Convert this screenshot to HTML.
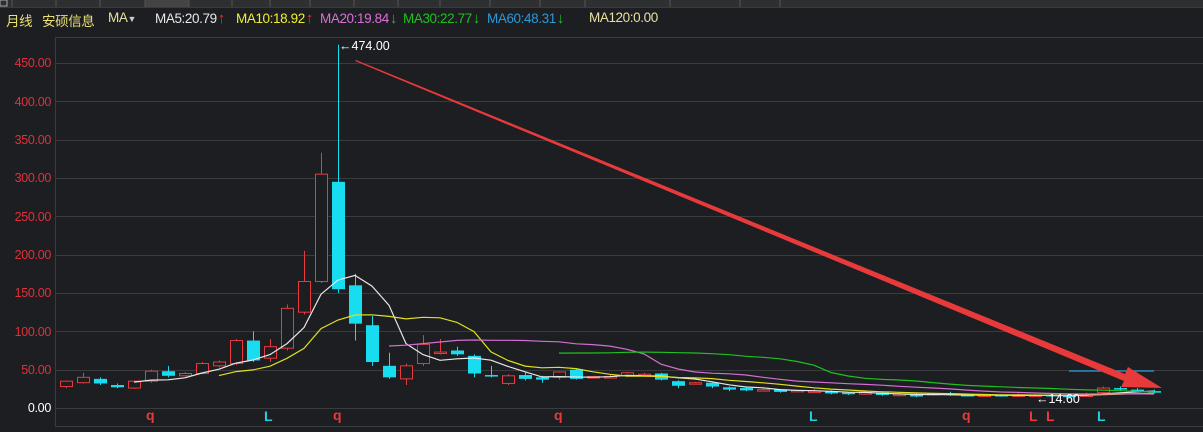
<!DOCTYPE html>
<html><head><meta charset="utf-8"><style>
body{margin:0;width:1203px;height:432px;background:#1d1e22;overflow:hidden;font-family:"Liberation Sans","Noto Sans CJK SC",sans-serif;position:relative}
.tb{position:absolute;left:0;top:0;width:1203px;height:7px;background:#2e2f31;border-bottom:1px solid #3a3a3a}
.hd{position:absolute;top:10px;left:6px;font-size:13.5px;white-space:nowrap;letter-spacing:-0.4px}
.hd span{position:absolute;top:0}
.hd b{font-size:15px;font-weight:900;margin-left:1px}
.ax{position:absolute;right:1152px;font-size:12.5px;color:#e0303a;text-align:right;letter-spacing:-0.3px}
</style></head><body>
<div class="tb">
<svg width="1203" height="7" style="position:absolute;left:0;top:0">
<rect x="0" y="0" width="7" height="6" fill="none" stroke="#aaa"/>
<rect x="145" y="0" width="44" height="7" fill="#444"/>
<g stroke="#555"><line x1="12" y1="0" x2="12" y2="7"/><line x1="56" y1="0" x2="56" y2="7"/><line x1="100" y1="0" x2="100" y2="7"/><line x1="145" y1="0" x2="145" y2="7"/><line x1="189" y1="0" x2="189" y2="7"/><line x1="232" y1="0" x2="232" y2="7"/><line x1="270" y1="0" x2="270" y2="7"/><line x1="310" y1="0" x2="310" y2="7"/><line x1="354" y1="0" x2="354" y2="7"/><line x1="398" y1="0" x2="398" y2="7"/><line x1="440" y1="0" x2="440" y2="7"/><line x1="490" y1="0" x2="490" y2="7"/><line x1="540" y1="0" x2="540" y2="7"/><line x1="585" y1="0" x2="585" y2="7"/><line x1="670" y1="0" x2="670" y2="7"/><line x1="740" y1="0" x2="740" y2="7"/><line x1="780" y1="0" x2="780" y2="7"/></g>
</svg></div>
<div class="hd">
<span style="left:0;color:#e8e070">月线</span>
<span style="left:36px;color:#e8e070">安硕信息</span>
<span style="left:102px;color:#e8e0a0">MA<span style="position:static;font-size:9px;color:#ccc">▼</span></span>
<span style="left:149px;color:#e8e8e8">MA5:20.79<b style="color:#f03030">↑</b></span>
<span style="left:230px;color:#f0f030">MA10:18.92<b style="color:#f03030">↑</b></span>
<span style="left:314px;color:#d870d8">MA20:19.84<b style="color:#20c020">↓</b></span>
<span style="left:397px;color:#20c020">MA30:22.77<b style="color:#20c020">↓</b></span>
<span style="left:481px;color:#2a9ad8">MA60:48.31<b style="color:#20c020">↓</b></span>
<span style="left:583px;color:#e8e0a0">MA120:0.00</span>
</div>
<div class="ax" style="top:56px">450.00</div>
<div class="ax" style="top:95px">400.00</div>
<div class="ax" style="top:133px">350.00</div>
<div class="ax" style="top:171px">300.00</div>
<div class="ax" style="top:210px">250.00</div>
<div class="ax" style="top:248px">200.00</div>
<div class="ax" style="top:286px">150.00</div>
<div class="ax" style="top:325px">100.00</div>
<div class="ax" style="top:363px">50.00</div>
<div class="ax" style="top:401px;color:#fff">0.00</div>
<svg id="c" width="1203" height="432" style="position:absolute;left:0;top:0">
<g stroke="#3a3b3f" stroke-width="1">
<line x1="55" y1="37.5" x2="1203" y2="37.5"/><line x1="55.5" y1="37" x2="55.5" y2="426"/>
<line x1="55" y1="426.5" x2="1203" y2="426.5"/>
</g>
<g id="grid" stroke="#3a3b3f"></g>
<g id="cand"></g>
<g id="ma" fill="none" stroke-width="1.2"></g>
<polygon points="355,61 356,60 1125,374 1128,367 1162,388 1121,387 1124,381" fill="#e83a3a"/>
<text x="339" y="50" fill="#fff" font-size="12.5" font-family="Liberation Sans">←474.00</text>
<text x="1036" y="403" fill="#fff" font-size="12.5" font-family="Liberation Sans">←14.60</text>
<g font-size="14" font-weight="bold" font-family="Liberation Sans">
<text x="146" y="420" fill="#e83a3a">q</text>
<text x="264" y="421" fill="#20d0e0">L</text>
<text x="333" y="420" fill="#e83a3a">q</text>
<text x="554" y="420" fill="#e83a3a">q</text>
<text x="809" y="421" fill="#20d0e0">L</text>
<text x="962" y="420" fill="#e83a3a">q</text>
<text x="1029" y="421" fill="#e83a3a">L</text>
<text x="1046" y="421" fill="#e83a3a">L</text>
<text x="1097" y="421" fill="#20d0e0">L</text>
</g>
</svg>
<script>
var Y=function(v){return 408-v*0.7667};
var g=document.getElementById('grid'),s='';
for(var v=0;v<=450;v+=50){var y=Math.round(Y(v))+0.5;s+='<line x1="56" y1="'+y+'" x2="1203" y2="'+y+'"/>';}
g.innerHTML=s;
var D=[[28,35,36,26],[33,40,46,32],[38,32,40,30],[30,27,32,26],[26,35,36,25],[35,48,50,33],[48,42,55,40],[42,45,47,41],[45,58,60,44],[55,60,62,53],[58,88,90,56],[88,62,100,60],[65,80,90,60],[78,130,135,75],[125,165,205,122],[165,305,333,163],[295,155,474,150],[160,110,175,88],[108,60,120,55],[55,40,72,38],[38,55,58,30],[58,83,95,55],[72,73,90,70],[75,70,80,68],[68,45,70,40],[43,41,55,40],[32,42,44,30],[43,38,46,36],[40,37,42,33],[40,47,48,37],[50,38,52,37],[40,41,42,39],[41,41,44,39],[42,46,47,41],[44,44,46,42],[45,37,46,36],[35,29,36,26],[32,33,34,31],[33,28,34,26],[27,24,28,22],[26,23,27,22],[23,24,26,22],[24,21,25,20],[22,23,24,21],[22,22,25,20],[22,19,23,18],[20,18,21,17],[18,20,22,17],[20,17,21,16],[17,18,20,15],[18,15,19,14],[17,19,20,16],[19,17,21,16],[17,16,18,15],[15,17,18,14.6],[17,15,18,14.6],[15,17,19,15],[16,17,18,15],[17,16,18,15],[16,15,17,15],[15,18,20,15],[20,26,28,19],[26,24,28,22],[24,22,26,21],[22,20,24,19]];
var h='';
D.forEach(function(d,i){var x=66+17*i,o=d[0],c=d[1],up=c>=o,col=up?'#e8393d':'#18dcf0';
var t=Y(Math.max(o,c)),b=Y(Math.min(o,c));if(b-t<1.5)b=t+1.5;
h+='<line x1="'+(x+.5)+'" y1="'+Y(d[2])+'" x2="'+(x+.5)+'" y2="'+Y(d[3])+'" stroke="'+col+'"/>';
if(up)h+='<rect x="'+(x-5.5)+'" y="'+t+'" width="12" height="'+(b-t)+'" fill="#1d1e22" stroke="'+col+'"/>';
else h+='<rect x="'+(x-6)+'" y="'+t+'" width="13" height="'+(b-t)+'" fill="'+col+'"/>';});
document.getElementById('cand').innerHTML=h;
function ma(n,col){var p=[];for(var i=n-1;i<D.length;i++){var s=0;for(var k=0;k<n;k++)s+=D[i-k][1];p.push((66+17*i)+','+Y(s/n).toFixed(1));}
return '<polyline points="'+p.join(' ')+'" stroke="'+col+'"/>';}
var m=ma(5,'#e8e8e8')+ma(10,'#e0e020')+ma(20,'#d070d0')+ma(30,'#20c020');
m+='<line x1="1069" y1="'+Y(48.3)+'" x2="1154" y2="'+Y(48.3)+'" stroke="#2a9ad8"/>';
document.getElementById('ma').innerHTML=m;
</script>
</body></html>
